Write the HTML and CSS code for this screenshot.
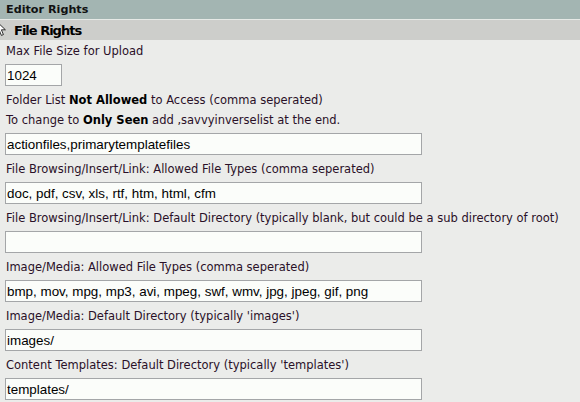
FILE: index.html
```html
<!DOCTYPE html>
<html>
<head>
<meta charset="utf-8">
<link rel="stylesheet" href="styles.css">
</head>
<body>
<div class="page">
  <div class="bar-main">Editor Rights</div>
  <div class="bar-sub">File Rights
    <svg class="cursor" width="12" height="20" viewBox="0 0 12 20"><path d="M0.5 0.5 L0.5 15.5 L4 12 L6.5 18 L9 17 L6.5 11 L11.5 11 Z" fill="#fff" stroke="#000" stroke-width="1"/></svg>
  </div>
  <div class="form">
    <div class="label first">Max File Size for Upload</div>
    <div class="field"><input class="input small" type="text" value="1024"></div>
    <div class="label">Folder List <b>Not Allowed</b> to Access (comma seperated)<br>To change to <b>Only Seen</b> add ,savvyinverselist at the end.</div>
    <div class="field"><input class="input" type="text" value="actionfiles,primarytemplatefiles"></div>
    <div class="label">File Browsing/Insert/Link: Allowed File Types (comma seperated)</div>
    <div class="field"><input class="input" type="text" value="doc, pdf, csv, xls, rtf, htm, html, cfm"></div>
    <div class="label">File Browsing/Insert/Link: Default Directory (typically blank, but could be a sub directory of root)</div>
    <div class="field"><input class="input" type="text" value=""></div>
    <div class="label">Image/Media: Allowed File Types (comma seperated)</div>
    <div class="field"><input class="input" type="text" value="bmp, mov, mpg, mp3, avi, mpeg, swf, wmv, jpg, jpeg, gif, png"></div>
    <div class="label">Image/Media: Default Directory (typically 'images')</div>
    <div class="field"><input class="input" type="text" value="images/"></div>
    <div class="label">Content Templates: Default Directory (typically 'templates')</div>
    <div class="field"><input class="input" type="text" value="templates/"></div>
  </div>
</div>
</body>
</html>
```
FILE: styles.css
```css
html, body {
  margin: 0;
  padding: 0;
  background: #ebecea;
}
.page {
  width: 580px;
  height: 402px;
  overflow: hidden;
  font-family: "DejaVu Sans", Verdana, sans-serif;
}
.bar-main {
  height: 19px;
  line-height: 19px;
  background: #a3b5b2;
  border-bottom: 1px solid #e6e9e6;
  padding-left: 6px;
  font-size: 11.2px;
  font-weight: bold;
  color: #111;
}
.bar-sub {
  position: relative;
  height: 20px;
  line-height: 21px;
  background: #cdcecb;
  padding-left: 14px;
  font-size: 13px;
  letter-spacing: -1px;
  font-weight: bold;
  color: #000;
}
.cursor {
  position: absolute;
  left: -5px;
  top: 1px;
  height: 16px;
}
.form {
  padding-left: 5px;
}
.label {
  font-size: 11.5px;
  line-height: 20px;
  padding-top: 4px;
  padding-bottom: 3px;
  padding-left: 1px;
  color: #2a1028;
}
.label.first {
  padding-top: 1px;
}
.label b {
  color: #000;
}
.field {
  height: 22px;
}
.input {
  box-sizing: border-box;
  display: block;
  width: 417px;
  height: 22px;
  margin: 0;
  padding: 0 1px;
  border: 1px solid #a4a6a8;
  background: #fbfdfa;
  font-family: "Liberation Sans", Arial, sans-serif;
  font-size: 13.4px;
  color: #000;
  outline: none;
}
.input.small {
  width: 57px;
}
```
